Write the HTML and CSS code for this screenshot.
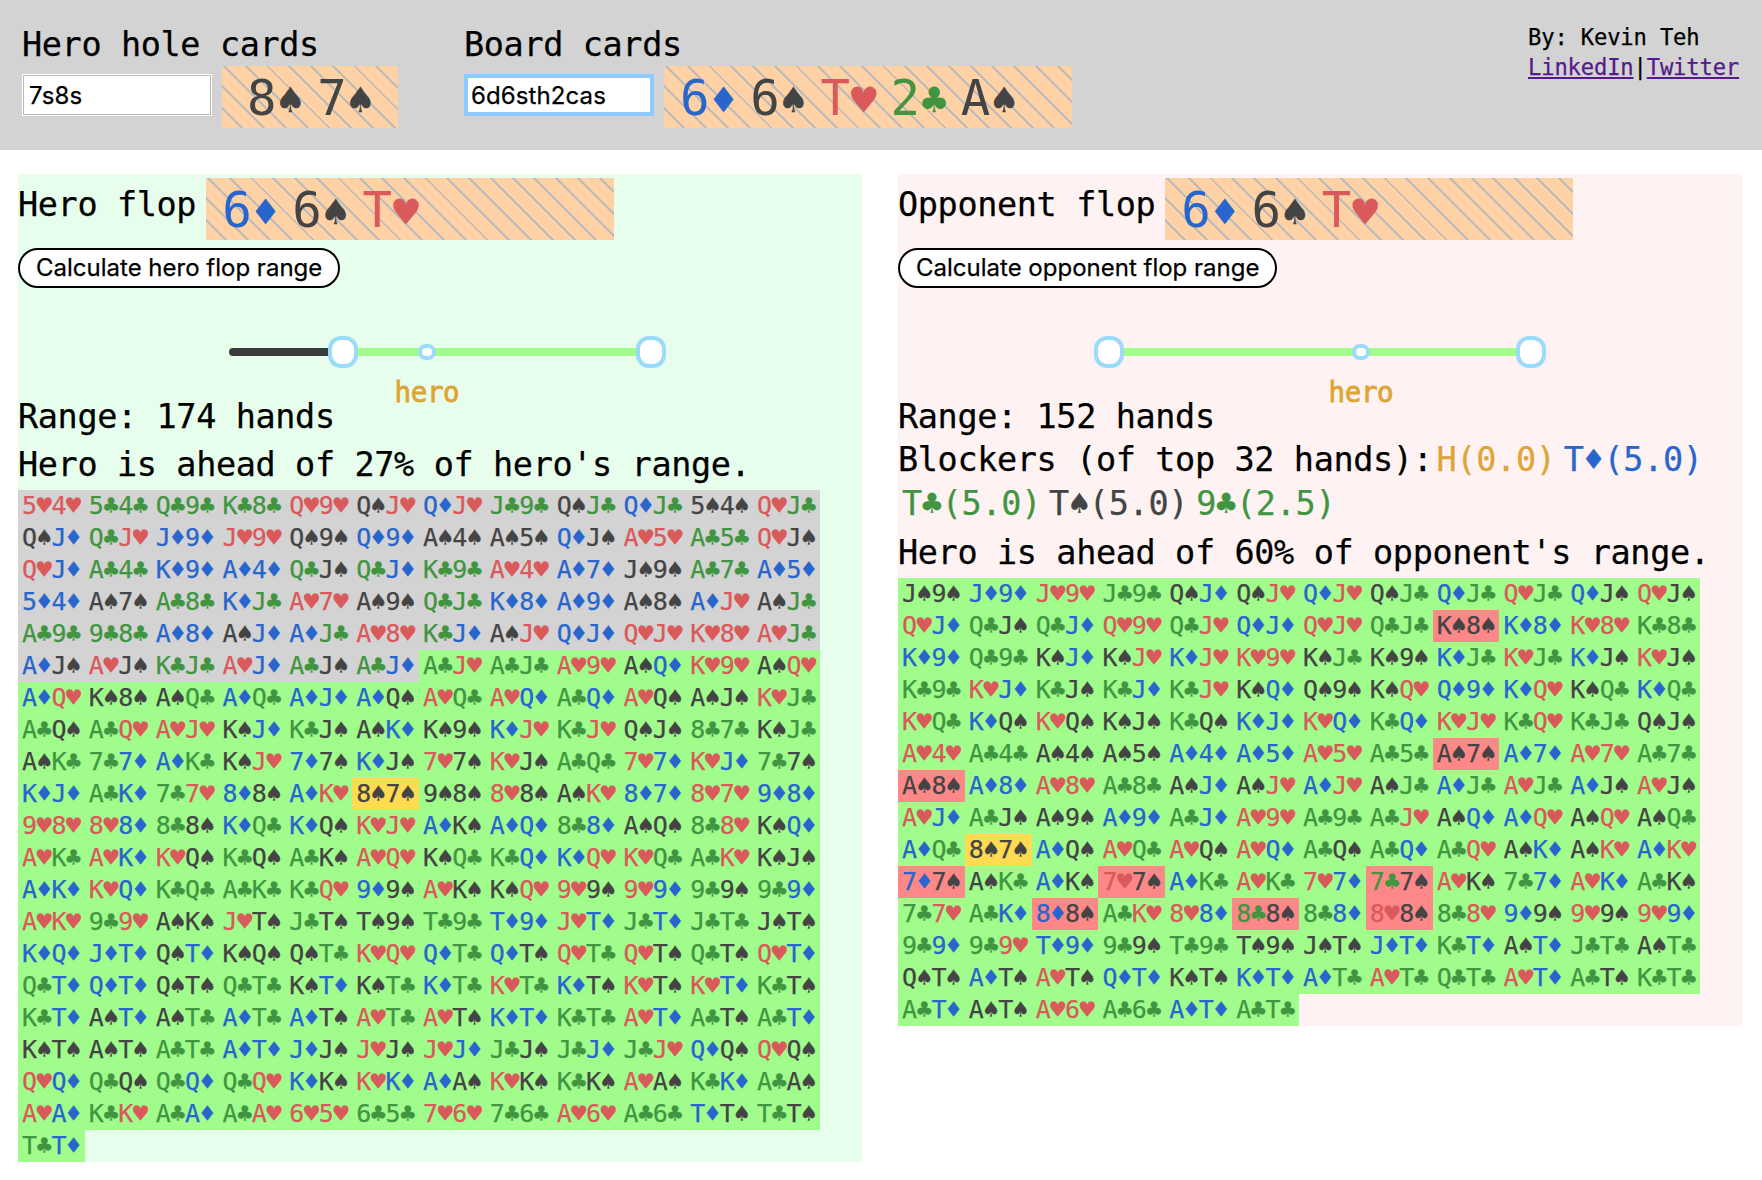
FILE: index.html
```html
<!DOCTYPE html>
<html lang="en">
<head>
<meta charset="utf-8">
<title>Range calculator</title>
<link rel="stylesheet" href="styles.css">
</head>
<body>
<header class="topbar">
  <section class="entry">
    <label class="entry-title" for="hole">Hero hole cards</label>
    <div class="entry-row">
      <input class="entry-input" id="hole" type="text" value="7s8s">
      <div class="board board-hole" data-cards="8s 7s"></div>
    </div>
  </section>
  <section class="entry">
    <label class="entry-title" for="boardcards">Board cards</label>
    <div class="entry-row">
      <input class="entry-input entry-active" id="boardcards" type="text" value="6d6sth2cas">
      <div class="board" data-cards="6d 6s Th 2c As"></div>
    </div>
  </section>
  <div class="credits">
    <div>By: Kevin Teh</div>
    <div><a href="#">LinkedIn</a>|<a href="#">Twitter</a></div>
  </div>
</header>
<main class="panels">
  <section class="panel panel-hero">
    <div class="flop-row">
      <h2 class="flop-title">Hero flop</h2>
      <div class="board" data-cards="6d 6s Th"></div>
    </div>
    <button class="calc">Calculate hero flop range</button>
    <div class="slider">
      <div class="track">
        <div class="track-off" style="width:27%"></div>
        <span class="knob" style="left:27%"></span>
        <span class="knob" style="left:100%"></span>
        <span class="dot" style="left:46.9%"></span>
        <span class="dot-label" style="left:46.9%">hero</span>
      </div>
    </div>
    <p class="line">Range: 174 hands</p>
    <p class="line">Hero is ahead of 27% of hero's range.</p>
    <div class="hands" id="hero-hands"></div>
  </section>
  <section class="panel panel-opponent">
    <div class="flop-row">
      <h2 class="flop-title">Opponent flop</h2>
      <div class="board" data-cards="6d 6s Th"></div>
    </div>
    <button class="calc">Calculate opponent flop range</button>
    <div class="slider">
      <div class="track">
        <span class="knob" style="left:0%"></span>
        <span class="knob" style="left:100%"></span>
        <span class="dot" style="left:59.7%"></span>
        <span class="dot-label" style="left:59.7%">hero</span>
      </div>
    </div>
    <p class="line line-tight">Range: 152 hands</p>
    <div class="blockers"><span>Blockers (of top 32 hands):</span><span class="blocker gold">H(0.0)</span><span class="blocker d">T♦(5.0)</span><span class="blocker c">T♣(5.0)</span><span class="blocker s">T♠(5.0)</span><span class="blocker c">9♣(2.5)</span></div>
    <p class="line">Hero is ahead of 60% of opponent's range.</p>
    <div class="hands" id="opponent-hands"></div>
  </section>
</main>
<script src="script.js"></script>
</body>
</html>
```
FILE: styles.css
```css
* { box-sizing: border-box; }

body {
  margin: 0;
  background: #fff;
  color: #000;
  font-family: "DejaVu Sans Mono", monospace;
  font-size: 33.5px;
  letter-spacing: -0.375px;
  -webkit-text-stroke: 0.25px;
}

.s { color: #444; }
.d { color: #2865cc; }
.h { color: #da595b; }
.c { color: #419541; }
.gold { color: #dfa436; }

/* Top bar */
.topbar {
  display: flex;
  height: 150px;
  padding: 22px 22px 0;
  background: #d3d3d3;
}

.entry { width: 442px; flex: none; }
.entry + .entry { width: 608px; }
.entry-title { display: block; height: 44px; line-height: 46px; }
.entry-row { display: flex; gap: 10px; }

.entry-input {
  width: 190px;
  height: 42px;
  margin-top: 8px;
  padding: 0 6px;
  border: 1px solid #fff;
  outline: 1px solid #bbb;
  outline-offset: -2px;
  background: #fff;
  color: #000;
  font-family: Inter, sans-serif;
  font-size: 24px;
  letter-spacing: 0.1px;
}

.entry-active {
  border: 4px solid #8ccbff;
  outline: none;
  padding-left: 3px;
}

.credits {
  width: 212px;
  margin-left: auto;
  font-size: 22.2px;
  line-height: 30px;
  letter-spacing: -0.17px;
  white-space: nowrap;
}
.credits a {
  color: #551a8b;
  text-decoration-thickness: 2px;
  text-underline-offset: 2px;
}

/* Striped strip that holds large cards */
.board {
  display: flex;
  gap: 13px;
  width: 408px;
  height: 62px;
  padding-left: 16px;
  font-size: 49px;
  line-height: 65px;
  letter-spacing: -0.9px;
  -webkit-text-stroke: 0;
  background: repeating-linear-gradient(45deg, #fed2a5 0, #fed2a5 13.4px, #bbb 13.4px, #bbb 15.39px);
}
.board-hole { width: 176px; padding-left: 25px; }
.board .suit {
  display: inline-block;
  width: 28.6px;
  font-size: 43px;
  text-align: center;
}

/* Panels */
.panels { display: flex; gap: 36px; align-items: flex-start; padding: 24px 0 0 18px; }
.panel { width: 844px; }
.panel-hero { background: #e6feeb; }
.panel-opponent { background: #fef3f2; }

.flop-row { display: flex; gap: 10px; padding-top: 4px; }
.flop-title { margin: 0; font-size: inherit; font-weight: 400; line-height: 54px; }

.calc {
  display: block;
  height: 40px;
  margin-top: 8px;
  padding: 0 16px 1px;
  border: 2px solid #000;
  border-radius: 20px;
  background: #fff;
  color: #000;
  font-family: Inter, sans-serif;
  font-size: 24px;
}

.slider { height: 104px; padding: 60px 25% 0; }
.track { position: relative; height: 8px; border-radius: 4px; background: #a0fd8c; }
.track-off { height: 8px; border-radius: 4px 0 0 4px; background: #3c3c3c; }
.knob, .dot {
  position: absolute;
  top: 50%;
  transform: translate(-50%, -50%);
  border: 4px solid #99dbf9;
  background: #fff;
}
.knob { width: 30px; height: 32px; border-radius: 13px; }
.dot { width: 18px; height: 16px; border-radius: 8px; }
.dot-label {
  position: absolute;
  top: 26px;
  transform: translateX(-50%);
  color: #dfa436;
  font-size: 27.5px;
  line-height: 36px;
  letter-spacing: -0.4px;
  -webkit-text-stroke: 0.8px #dfa436;
}

.line { margin: 0; height: 48px; line-height: 49px; white-space: nowrap; }
.line-tight { height: 46px; }
.blockers { margin-bottom: 2px; line-height: 44px; }
.blocker { display: inline-block; padding: 0 4px; letter-spacing: -0.3px; }

.hands {
  display: grid;
  grid-template-columns: repeat(12, 66.83px);
  margin-top: 2px;
}
.hand {
  height: 32px;
  padding-left: 4px;
  font-size: 25px;
  line-height: 31px;
  white-space: nowrap;
}
.out { background: #d3d3d3; }
.in { background: #a0fd8c; }
.current { background: #fedb50; }
.ahead { background: #fe8888; }
```
FILE: script.js
```js
const SUITS = { s: "♠", d: "♦", h: "♥", c: "♣" };

const heroHands = `
5h4h 5c4c Qc9c Kc8c Qh9h QsJh QdJh Jc9c QsJc QdJc 5s4s QhJc
QsJd QcJh Jd9d Jh9h Qs9s Qd9d As4s As5s QdJs Ah5h Ac5c QhJs
QhJd Ac4c Kd9d Ad4d QcJs QcJd Kc9c Ah4h Ad7d Js9s Ac7c Ad5d
5d4d As7s Ac8c KdJc Ah7h As9s QcJc Kd8d Ad9d As8s AdJh AsJc
Ac9c 9c8c Ad8d AsJd AdJc Ah8h KcJd AsJh QdJd QhJh Kh8h AhJc
AdJs AhJs KcJc AhJd AcJs AcJd AcJh AcJc Ah9h AsQd Kh9h AsQh
AdQh Ks8s AsQc AdQc AdJd AdQs AhQc AhQd AcQd AhQs AsJs KhJc
AcQs AcQh AhJh KsJd KcJs AsKd Ks9s KdJh KcJh QsJs 8c7c KsJc
AsKc 7c7d AdKc KsJh 7d7s KdJs 7h7s KhJs AcQc 7h7d KhJd 7c7s
KdJd AcKd 7c7h 8d8s AdKh 8s7s 9s8s 8h8s AsKh 8d7d 8h7h 9d8d
9h8h 8h8d 8c8s KdQc KdQs KhJh AdKs AdQd 8c8d AsQs 8c8h KsQd
AhKc AhKd KhQs KcQs AcKs AhQh KsQc KcQd KdQh KhQc AcKh KsJs
AdKd KhQd KcQc AcKc KcQh 9d9s AhKs KsQh 9h9s 9h9d 9c9s 9c9d
AhKh 9c9h AsKs JhTs JcTs Ts9s Tc9c Td9d JhTd JcTd JcTc JsTs
KdQd JdTd QsTd KsQs QsTc KhQh QdTc QdTs QhTc QhTs QcTs QhTd
QcTd QdTd QsTs QcTc KsTd KsTc KdTc KhTc KdTs KhTs KhTd KcTs
KcTd AsTd AsTc AdTc AdTs AhTc AhTs KdTd KcTc AhTd AcTs AcTd
KsTs AsTs AcTc AdTd JdJs JhJs JhJd JcJs JcJd JcJh QdQs QhQs
QhQd QcQs QcQd QcQh KdKs KhKd AdAs KhKs KcKs AhAs KcKd AcAs
AhAd KcKh AcAd AcAh 6h5h 6c5c 7h6h 7c6c Ah6h Ac6c TdTs TcTs
TcTd`;

const opponentHands = `
Js9s Jd9d Jh9h Jc9c QsJd QsJh QdJh QsJc QdJc QhJc QdJs QhJs
QhJd QcJs QcJd Qh9h QcJh QdJd QhJh QcJc Ks8s Kd8d Kh8h Kc8c
Kd9d Qc9c KsJd KsJh KdJh Kh9h KsJc Ks9s KdJc KhJc KdJs KhJs
Kc9c KhJd KcJs KcJd KcJh KsQd Qs9s KsQh Qd9d KdQh KsQc KdQc
KhQc KdQs KhQs KsJs KcQs KdJd KhQd KcQd KhJh KcQh KcJc QsJs
Ah4h Ac4c As4s As5s Ad4d Ad5d Ah5h Ac5c As7s Ad7d Ah7h Ac7c
As8s Ad8d Ah8h Ac8c AsJd AsJh AdJh AsJc AdJc AhJc AdJs AhJs
AhJd AcJs As9s Ad9d AcJd Ah9h Ac9c AcJh AsQd AdQh AsQh AsQc
AdQc 8s7s AdQs AhQc AhQs AhQd AcQs AcQd AcQh AsKd AsKh AdKh
7d7s AsKc AdKs 7h7s AdKc AhKc 7h7d 7c7s AhKs 7c7d AhKd AcKs
7c7h AcKd 8d8s AcKh 8h8d 8c8s 8c8d 8h8s 8c8h 9d9s 9h9s 9h9d
9c9d 9c9h Td9d 9c9s Tc9c Ts9s JsTs JdTd KcTd AsTd JcTc AsTc
QsTs AdTs AhTs QdTd KsTs KdTd AdTc AhTc QcTc AhTd AcTs KcTc
AcTd AsTs Ah6h Ac6c AdTd AcTc`;

const beatenByHero = new Set(["Ks8s", "As7s", "As8s", "7d7s", "7h7s", "7c7s", "8d8s", "8c8s", "8h8s"]);

function card(code) {
  const el = document.createElement("span");
  el.className = code[1];
  const suit = document.createElement("span");
  suit.className = "suit";
  suit.textContent = SUITS[code[1]];
  el.append(code[0], suit);
  return el;
}

function fill(id, text, kindOf) {
  const box = document.getElementById(id);
  text.trim().split(/\s+/).forEach((hand, i) => {
    const el = document.createElement("div");
    el.className = "hand " + (hand === "8s7s" ? "current" : kindOf(hand, i));
    el.append(card(hand.slice(0, 2)), card(hand.slice(2)));
    box.append(el);
  });
}

document.querySelectorAll(".board").forEach(b => b.append(...b.dataset.cards.split(" ").map(card)));
fill("hero-hands", heroHands, (hand, i) => (i < 66 ? "out" : "in"));
fill("opponent-hands", opponentHands, hand => (beatenByHero.has(hand) ? "ahead" : "in"));
```
